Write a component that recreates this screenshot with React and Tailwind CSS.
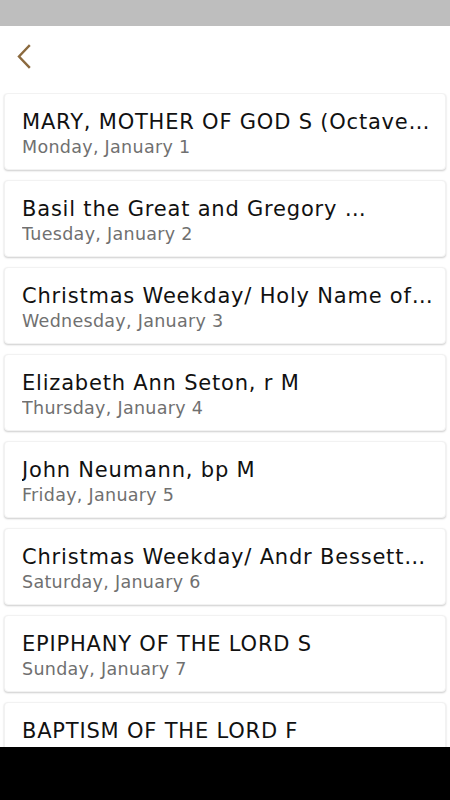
const days = [
  { title: 'MARY, MOTHER OF GOD S (Octave…', date: 'Monday, January 1' },
  { title: 'Basil the Great and Gregory …', date: 'Tuesday, January 2' },
  { title: 'Christmas Weekday/ Holy Name of…', date: 'Wednesday, January 3' },
  { title: 'Elizabeth Ann Seton, r M', date: 'Thursday, January 4' },
  { title: 'John Neumann, bp M', date: 'Friday, January 5' },
  { title: 'Christmas Weekday/ Andr Bessett…', date: 'Saturday, January 6' },
  { title: 'EPIPHANY OF THE LORD S', date: 'Sunday, January 7' },
  { title: 'BAPTISM OF THE LORD F', date: 'Monday, January 8' },
];

export default function App() {
  return (
    <div
      className="h-[800px] w-[450px] flex flex-col bg-white overflow-hidden"
      style={{ fontFamily: '"DejaVu Sans", sans-serif' }}
    >
      <div className="h-[26px] shrink-0 bg-[#bebebe]" />

      <div className="h-[67px] shrink-0 pl-[16px] pt-[18px]">
        <svg width="16" height="25" viewBox="0 0 16 25" fill="none">
          <path d="M13 2 L3 12.5 L13 23" stroke="#8b6a3f" strokeWidth="2.4" strokeLinecap="square" />
        </svg>
      </div>

      <div className="flex-1 overflow-hidden px-[4px] flex flex-col gap-[10px]">
        {days.map((d) => (
          <div
            key={d.date}
            className="shrink-0 h-[77px] rounded-[4px] bg-white border border-[#f2f2f2] shadow-[0_1px_2px_rgba(0,0,0,0.2)] pl-[17px] pr-[10px] pt-[13px]"
          >
            <div className="text-[21px] leading-[30px] tracking-[0.8px] text-[#111] whitespace-nowrap overflow-hidden">{d.title}</div>
            <div className="text-[17.5px] leading-[20px] tracking-[0.3px] text-[#707070] truncate">{d.date}</div>
          </div>
        ))}
      </div>

      <div className="h-[53px] shrink-0 bg-black" />
    </div>
  );
}
